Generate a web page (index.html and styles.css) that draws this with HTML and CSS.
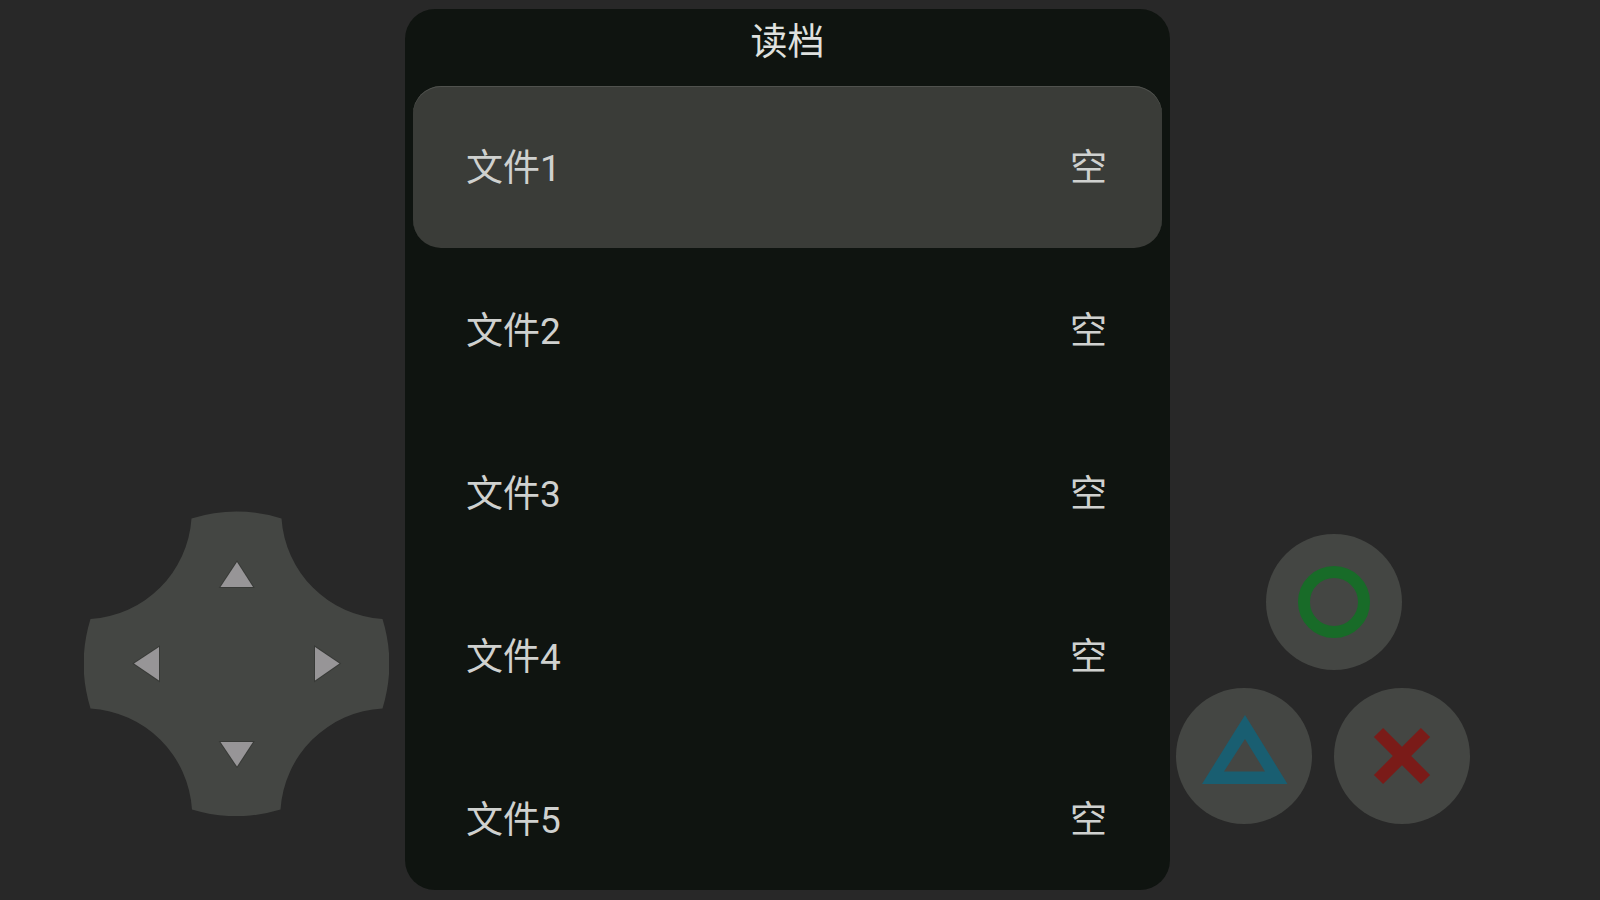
FILE: index.html
```html
<!DOCTYPE html>
<html lang="zh-CN">
<head>
    <meta charset="UTF-8">
    <meta name="viewport" content="width=device-width, initial-scale=1.0">
    <title>读档</title>
    <link rel="stylesheet" href="styles.css">
</head>
<body>

<div class="screen">
    <!-- Direction pad -->
    <div class="side side-left">
        <div class="dpad">
            <svg class="dpad-shape" viewBox="0 0 305 305" aria-hidden="true">
                <path d="M107.5 7.5 A152.5 152.5 0 0 1 197.5 7.5 A108 108 0 0 0 298.5 108 A152.5 152.5 0 0 1 298.5 197.5 A108 108 0 0 0 196.5 298.5 A152.5 152.5 0 0 1 108 298.5 A108 108 0 0 0 6.5 197.5 A152.5 152.5 0 0 1 6.5 108 A108 108 0 0 0 107.5 7.5 Z"/>
            </svg>
            <button class="arrow arrow-up" type="button" aria-label="上">
                <svg viewBox="0 0 36 36"><path d="M18 6 L34 31 H1.5 Z"/></svg>
            </button>
            <button class="arrow arrow-left" type="button" aria-label="左">
                <svg viewBox="0 0 36 36"><path d="M5 17.5 L30 1 V34.5 Z"/></svg>
            </button>
            <button class="arrow arrow-right" type="button" aria-label="右">
                <svg viewBox="0 0 36 36"><path d="M31.5 17.5 L7 1 V34.5 Z"/></svg>
            </button>
            <button class="arrow arrow-down" type="button" aria-label="下">
                <svg viewBox="0 0 36 36"><path d="M18 31.5 L34 7 H1.5 Z"/></svg>
            </button>
        </div>
    </div>

    <!-- Load game menu -->
    <main class="panel">
        <h1 class="panel-title">读档</h1>
        <div class="slots">
            <button class="slot selected" type="button"><span>文件1</span><span>空</span></button>
            <button class="slot" type="button"><span>文件2</span><span>空</span></button>
            <button class="slot" type="button"><span>文件3</span><span>空</span></button>
            <button class="slot" type="button"><span>文件4</span><span>空</span></button>
            <button class="slot" type="button"><span>文件5</span><span>空</span></button>
        </div>
    </main>

    <!-- Action buttons -->
    <div class="side side-right">
        <div class="actions-top">
            <button class="action" type="button" aria-label="圆圈">
                <svg viewBox="0 0 136 136"><circle class="ring" cx="68" cy="68" r="30"/></svg>
            </button>
        </div>
        <div class="actions-bottom">
            <button class="action" type="button" aria-label="三角">
                <svg viewBox="0 0 136 136"><path class="triangle" d="M69 27 L111.5 96 H26 Z M69 51 L48 83.5 H89 Z"/></svg>
            </button>
            <button class="action" type="button" aria-label="叉">
                <svg viewBox="0 0 136 136"><path class="cross" d="M44.5 44.5 L91.5 91.5 M91.5 44.5 L44.5 91.5"/></svg>
            </button>
        </div>
    </div>
</div>

</body>
</html>
```
FILE: styles.css
```css
* {
    box-sizing: border-box;
}

body {
    margin: 0;
    background-color: #282828;
    color: #cfd1cf;
    font-family: Roboto, "Noto Sans CJK SC", sans-serif;
}

button {
    padding: 0;
    border: none;
    background: none;
    color: inherit;
    font: inherit;
    cursor: pointer;
}

.screen {
    display: grid;
    grid-template-columns: 405fr 765fr 430fr;
    height: 100vh;
    overflow: hidden;
}

.side {
    display: flex;
    flex-direction: column;
    justify-content: flex-end;
}

/* Direction pad */
.side-left {
    align-items: flex-end;
    padding: 0 16px 84px 0;
}

.dpad {
    display: grid;
    grid-template-columns: 45px 36px 1fr 36px 45px;
    grid-template-rows: 45px 36px 1fr 36px 45px;
    place-items: center;
    width: 305px;
    aspect-ratio: 1;
}

.dpad-shape {
    grid-area: 1 / 1 / -1 / -1;
    width: 100%;
    fill: #444643;
}

.arrow {
    width: 36px;
    height: 36px;
}

.arrow svg {
    display: block;
    fill: #979597;
    stroke: #383a37;
    stroke-width: 2;
    paint-order: stroke;
    overflow: visible;
}

.arrow-up {
    grid-area: 2 / 3;
}

.arrow-left {
    grid-area: 3 / 2;
}

.arrow-right {
    grid-area: 3 / 4;
}

.arrow-down {
    grid-area: 4 / 3;
}

/* Load game menu */
.panel {
    display: flex;
    flex-direction: column;
    margin: 9px 0 10px;
    padding: 0 8px;
    border-radius: 30px;
    background-color: #0f1410;
    overflow: hidden;
}

.panel-title {
    flex: none;
    margin: 0;
    padding-bottom: 9px;
    color: #dfe1df;
    font-size: 37px;
    font-weight: 400;
    line-height: 68px;
    text-align: center;
}

.slots {
    display: flex;
    flex-direction: column;
    gap: 1px;
}

.slot {
    display: flex;
    flex: none;
    justify-content: space-between;
    align-items: center;
    height: 162px;
    padding: 4px 55px 0 53px;
    border-radius: 28px;
    font-size: 37px;
    line-height: 56px;
}

.slot.selected {
    background-color: #3a3c38;
    box-shadow: inset 0 1px #50524e;
}

/* Action buttons */
.side-right {
    gap: 18px;
    padding: 0 0 76px 6px;
}

.actions-top {
    padding-left: 90px;
}

.actions-bottom {
    display: flex;
    gap: 22px;
}

/* flex keeps the button's baseline gap out of the row */
.actions-top {
    display: flex;
}

.action {
    width: 136px;
    height: 136px;
    border-radius: 50%;
    background-color: #444643;
}

.action svg {
    display: block;
}

.ring {
    fill: none;
    stroke: #186b28;
    stroke-width: 12;
}

.triangle {
    fill: #195e71;
    fill-rule: evenodd;
}

.cross {
    fill: none;
    stroke: #7a1b18;
    stroke-width: 13;
}
```
